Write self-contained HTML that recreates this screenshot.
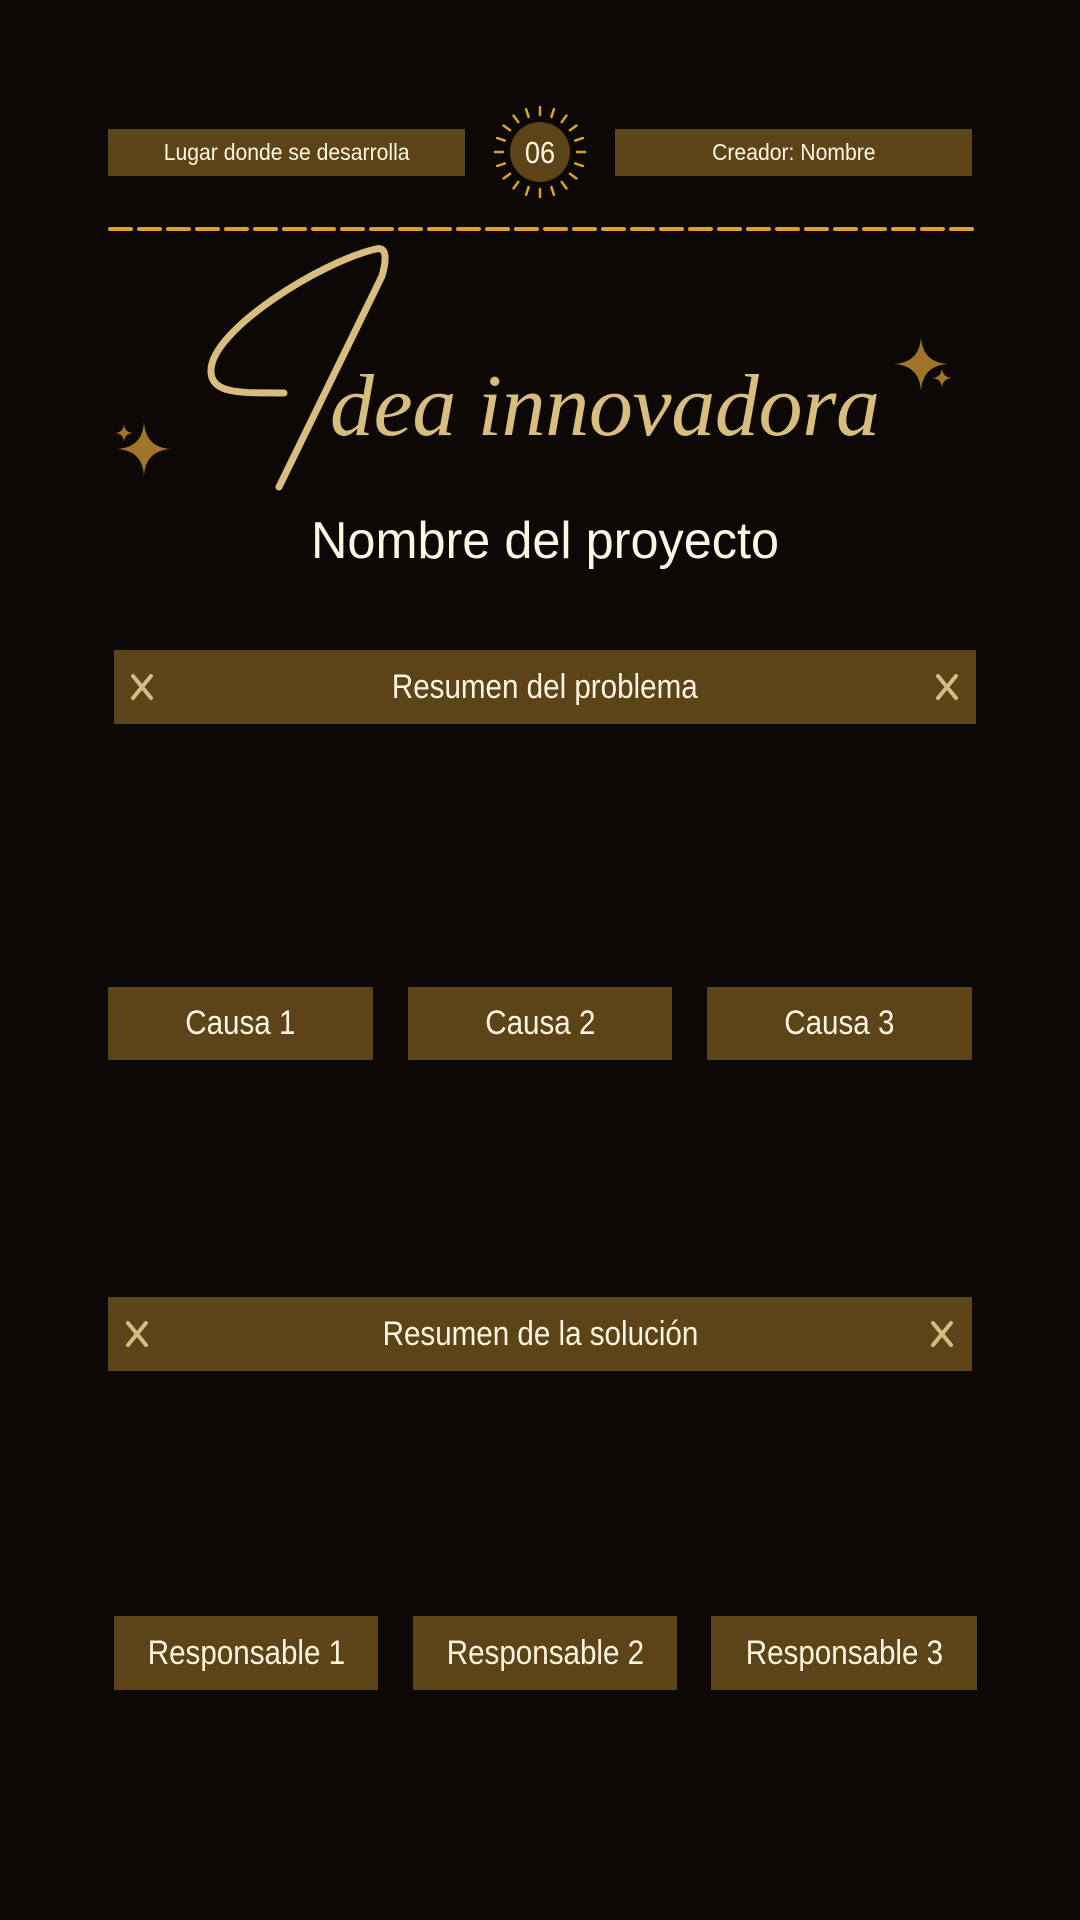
<!DOCTYPE html>
<html><head><meta charset="utf-8"><style>
html,body{margin:0;padding:0;background:#0b0806;}
body{width:1080px;height:1920px;position:relative;overflow:hidden;font-family:"Liberation Sans",sans-serif;}
.b{position:absolute;background:#5c4318;color:#fff5e0;display:flex;align-items:center;justify-content:center;}
.b span{display:inline-block;transform:scaleX(.87);white-space:nowrap;}
.sm{font-size:23px;}
.sm span{transform:scaleX(.92);}
.lg{font-size:34px;}
</style></head><body>
<div class="b sm" style="left:108px;top:129px;width:357px;height:47px;"><span>Lugar donde se desarrolla</span></div>
<div class="b sm" style="left:615px;top:129px;width:357px;height:47px;"><span>Creador: Nombre</span></div>

<div class="b lg" style="left:114px;top:650px;width:862px;height:74px;"><span>Resumen del problema</span></div>
<div class="b lg" style="left:108px;top:987px;width:265px;height:73px;"><span>Causa 1</span></div>
<div class="b lg" style="left:408px;top:987px;width:264px;height:73px;"><span>Causa 2</span></div>
<div class="b lg" style="left:707px;top:987px;width:265px;height:73px;"><span>Causa 3</span></div>
<div class="b lg" style="left:108px;top:1297px;width:864px;height:74px;"><span>Resumen de la solución</span></div>
<div class="b lg" style="left:114px;top:1616px;width:264px;height:74px;"><span>Responsable 1</span></div>
<div class="b lg" style="left:413px;top:1616px;width:264px;height:74px;"><span>Responsable 2</span></div>
<div class="b lg" style="left:711px;top:1616px;width:266px;height:74px;"><span>Responsable 3</span></div>

<svg width="1080" height="1920" style="position:absolute;left:0;top:0" xmlns="http://www.w3.org/2000/svg">
<circle cx="540" cy="152" r="30" fill="#5c4318"/>
<text x="540" y="163" text-anchor="middle" font-family="Liberation Sans, sans-serif" font-size="31" fill="#fff5e0" transform="translate(540 0) scale(.88 1) translate(-540 0)">06</text>
<line x1="110" y1="229" x2="972" y2="229" stroke="#d9a22e" stroke-width="4" stroke-dasharray="21 8" stroke-linecap="round"/>
<path d="M284 393 C250 392 210 397 211 370 C212 330 320 262 376 249 C388 246 386 262 382 276 L279 487" fill="none" stroke="#d9bd7e" stroke-width="7" stroke-linecap="round" stroke-linejoin="round"/>
<text x="330" y="435" font-family="Liberation Serif, serif" font-style="italic" font-size="88" letter-spacing="4" fill="#d9bd7e" textLength="554">dea innovadora</text>
<g fill="#a0752a">
<path d="M144 422 Q145.5 447.5 171 449 Q145.5 450.5 144 476 Q142.5 450.5 117 449 Q142.5 447.5 144 422Z"/>
<path d="M124 424 Q124.6 432.4 133 433 Q124.6 433.6 124 442 Q123.4 433.6 115 433 Q123.4 432.4 124 424Z"/>
<path d="M921 337 Q922.5 362.5 948 364 Q922.5 365.5 921 391 Q919.5 365.5 894 364 Q919.5 362.5 921 337Z"/>
<path d="M942 368 Q942.6 377.4 952 378 Q942.6 378.6 942 388 Q941.4 378.6 932 378 Q941.4 377.4 942 368Z"/>
</g>
<text x="545" y="558" text-anchor="middle" font-family="Liberation Sans, sans-serif" font-size="52" fill="#fff5e0" textLength="468" lengthAdjust="spacingAndGlyphs">Nombre del proyecto</text>
<g stroke="#d4bc84" stroke-width="4" stroke-linecap="round">
<path d="M133 676 L151 698 M151 676 L133 698"/>
<path d="M938 676 L956 698 M956 676 L938 698"/>
<path d="M128 1323 L146 1345 M146 1323 L128 1345"/>
<path d="M933 1323 L951 1345 M951 1323 L933 1345"/>
</g>
<g stroke="#d9a22e" stroke-width="2.5" stroke-linecap="round">
<line x1="540" y1="115" x2="540" y2="107" transform="rotate(0 540 152)"/>
<line x1="540" y1="115" x2="540" y2="107" transform="rotate(18 540 152)"/>
<line x1="540" y1="115" x2="540" y2="107" transform="rotate(36 540 152)"/>
<line x1="540" y1="115" x2="540" y2="107" transform="rotate(54 540 152)"/>
<line x1="540" y1="115" x2="540" y2="107" transform="rotate(72 540 152)"/>
<line x1="540" y1="115" x2="540" y2="107" transform="rotate(90 540 152)"/>
<line x1="540" y1="115" x2="540" y2="107" transform="rotate(108 540 152)"/>
<line x1="540" y1="115" x2="540" y2="107" transform="rotate(126 540 152)"/>
<line x1="540" y1="115" x2="540" y2="107" transform="rotate(144 540 152)"/>
<line x1="540" y1="115" x2="540" y2="107" transform="rotate(162 540 152)"/>
<line x1="540" y1="115" x2="540" y2="107" transform="rotate(180 540 152)"/>
<line x1="540" y1="115" x2="540" y2="107" transform="rotate(198 540 152)"/>
<line x1="540" y1="115" x2="540" y2="107" transform="rotate(216 540 152)"/>
<line x1="540" y1="115" x2="540" y2="107" transform="rotate(234 540 152)"/>
<line x1="540" y1="115" x2="540" y2="107" transform="rotate(252 540 152)"/>
<line x1="540" y1="115" x2="540" y2="107" transform="rotate(270 540 152)"/>
<line x1="540" y1="115" x2="540" y2="107" transform="rotate(288 540 152)"/>
<line x1="540" y1="115" x2="540" y2="107" transform="rotate(306 540 152)"/>
<line x1="540" y1="115" x2="540" y2="107" transform="rotate(324 540 152)"/>
<line x1="540" y1="115" x2="540" y2="107" transform="rotate(342 540 152)"/>
</g>
</svg>
</body></html>
